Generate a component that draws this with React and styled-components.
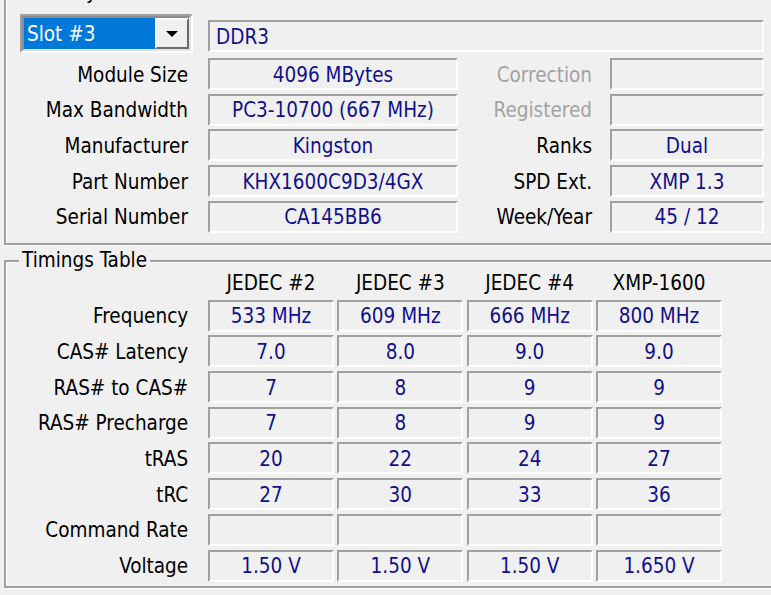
import React from "react";
import styled, { createGlobalStyle } from "styled-components";

const GlobalStyle = createGlobalStyle`
  body {
    margin: 0;
    background: #f0f0f0;
    font-family: "DejaVu Sans Condensed", "DejaVu Sans", sans-serif;
    font-size: 20.5px;
  }
`;

const Page = styled.div`
  width: 771px;
  height: 595px;
  overflow: hidden;
  background: #f0f0f0;
  color: #000;
`;

const Group = styled.div`
  position: relative;
  box-sizing: border-box;
  width: 790px;
  margin-left: 4px;
  margin-top: ${(p) => p.top}px;
  padding: ${(p) => p.pad};
  border: 2px solid #a0a0a0;
  box-shadow: inset 1px 1px 0 #fff, 1px 1px 0 #fff;
`;

const Legend = styled.span`
  position: absolute;
  top: -15px;
  left: 13px;
  padding: 0 3px 0 3px;
  background: #f0f0f0;
  line-height: 26px;
`;

const SlotRow = styled.div`
  display: flex;
  align-items: flex-start;
  padding-left: 14px;
  margin-bottom: 5px;
`;

const Combo = styled.div`
  box-sizing: border-box;
  width: 173px;
  height: 39px;
  display: flex;
  border: 2px solid;
  border-color: #a0a0a0 #fff #fff #a0a0a0;
`;

const ComboInner = styled.div`
  flex: 1;
  display: flex;
  border: 2px solid;
  border-color: #8c8c8c #e3e3e3 #e3e3e3 #8c8c8c;
`;

const Selected = styled.div`
  flex: 1;
  display: flex;
  align-items: center;
  padding-left: 3px;
  background: #0078d7;
  color: #fff;
`;

const DropButton = styled.div`
  box-sizing: border-box;
  width: 34px;
  display: flex;
  align-items: center;
  justify-content: center;
  background: #f0f0f0;
  border: 2px solid;
  border-color: #fff #6b6b6b #6b6b6b #fff;
`;

const Arrow = styled.div`
  width: 0;
  height: 0;
  border-left: 6px solid transparent;
  border-right: 6px solid transparent;
  border-top: 6px solid #000;
`;

const Field = styled.div`
  box-sizing: border-box;
  height: 32px;
  display: flex;
  align-items: center;
  justify-content: ${(p) => (p.left ? "flex-start" : "center")};
  padding-left: ${(p) => (p.left ? "6px" : "0")};
  padding-top: 1px;
  border: 2px solid;
  border-color: #a0a0a0 #fff #fff #a0a0a0;
  color: #10108a;
  white-space: nowrap;
`;

const TypeField = styled(Field)`
  flex: 0 0 556px;
  margin-left: 15px;
  margin-top: 6px;
`;

const InfoGrid = styled.div`
  display: grid;
  grid-template-columns: 202px 250px 152px 154px;
  grid-auto-rows: 32px;
  row-gap: 3.7px;
`;

const Label = styled.div`
  display: flex;
  align-items: center;
  justify-content: flex-end;
  padding-top: 1px;
  padding-right: ${(p) => p.pr || 20}px;
  color: ${(p) => (p.disabled ? "#a3a3a3" : "#000")};
  white-space: nowrap;
`;

const TimingGrid = styled.div`
  display: grid;
  grid-template-columns: 198.7px repeat(4, 126px);
  grid-auto-rows: 32px;
  column-gap: 3.33px;
  row-gap: 3.7px;
`;

const Head = styled.div`
  display: flex;
  align-items: center;
  justify-content: center;
  padding-top: 6px;
  white-space: nowrap;
`;

const info = [
  ["Module Size", "4096 MBytes", "Correction", "", true],
  ["Max Bandwidth", "PC3-10700 (667 MHz)", "Registered", "", true],
  ["Manufacturer", "Kingston", "Ranks", "Dual", false],
  ["Part Number", "KHX1600C9D3/4GX", "SPD Ext.", "XMP 1.3", false],
  ["Serial Number", "CA145BB6", "Week/Year", "45 / 12", false],
];

const heads = ["JEDEC #2", "JEDEC #3", "JEDEC #4", "XMP-1600"];

const timings = [
  ["Frequency", ["533 MHz", "609 MHz", "666 MHz", "800 MHz"]],
  ["CAS# Latency", ["7.0", "8.0", "9.0", "9.0"]],
  ["RAS# to CAS#", ["7", "8", "9", "9"]],
  ["RAS# Precharge", ["7", "8", "9", "9"]],
  ["tRAS", ["20", "22", "24", "27"]],
  ["tRC", ["27", "30", "33", "36"]],
  ["Command Rate", ["", "", "", ""]],
  ["Voltage", ["1.50 V", "1.50 V", "1.50 V", "1.650 V"]],
];

export default function App() {
  return (
    <Page>
      <GlobalStyle />
      <Group top={-8} pad="20px 0 10px 0">
        <Legend>Memory Slot Selection</Legend>
        <SlotRow>
          <Combo>
            <ComboInner>
              <Selected>Slot #3</Selected>
              <DropButton>
                <Arrow />
              </DropButton>
            </ComboInner>
          </Combo>
          <TypeField left>DDR3</TypeField>
        </SlotRow>
        <InfoGrid>
          {info.map(([l, v, rl, rv, dis]) => (
            <React.Fragment key={l}>
              <Label>{l}</Label>
              <Field>{v}</Field>
              <Label pr={18} disabled={dis}>
                {rl}
              </Label>
              <Field>{rv}</Field>
            </React.Fragment>
          ))}
        </InfoGrid>
      </Group>
      <Group top={15} pad="2.3px 0 4px 0">
        <Legend>Timings Table</Legend>
        <TimingGrid>
          <div />
          {heads.map((h) => (
            <Head key={h}>{h}</Head>
          ))}
          {timings.map(([l, vals]) => (
            <React.Fragment key={l}>
              <Label pr={16.5}>{l}</Label>
              {vals.map((v, i) => (
                <Field key={i}>{v}</Field>
              ))}
            </React.Fragment>
          ))}
        </TimingGrid>
      </Group>
    </Page>
  );
}
